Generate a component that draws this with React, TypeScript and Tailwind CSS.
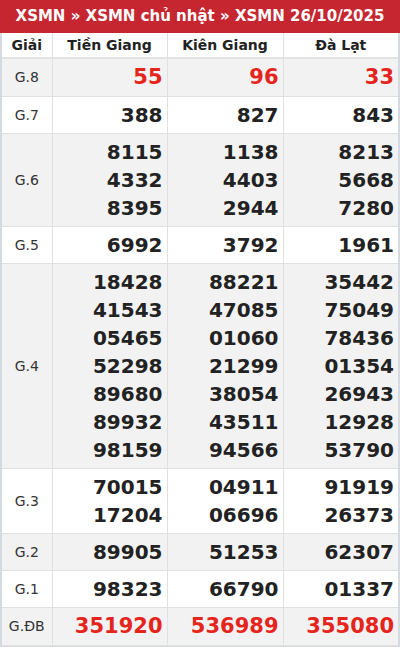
import React from 'react';

type Row = { label: string; values: string[][]; red?: boolean; shaded: boolean };

const provinces = ['Tiền Giang', 'Kiên Giang', 'Đà Lạt'];

const rows: Row[] = [
  { label: 'G.8', values: [['55'], ['96'], ['33']], red: true, shaded: true },
  { label: 'G.7', values: [['388'], ['827'], ['843']], shaded: false },
  { label: 'G.6', values: [['8115', '4332', '8395'], ['1138', '4403', '2944'], ['8213', '5668', '7280']], shaded: true },
  { label: 'G.5', values: [['6992'], ['3792'], ['1961']], shaded: false },
  {
    label: 'G.4',
    values: [
      ['18428', '41543', '05465', '52298', '89680', '89932', '98159'],
      ['88221', '47085', '01060', '21299', '38054', '43511', '94566'],
      ['35442', '75049', '78436', '01354', '26943', '12928', '53790'],
    ],
    shaded: true,
  },
  { label: 'G.3', values: [['70015', '17204'], ['04911', '06696'], ['91919', '26373']], shaded: false },
  { label: 'G.2', values: [['89905'], ['51253'], ['62307']], shaded: true },
  { label: 'G.1', values: [['98323'], ['66790'], ['01337']], shaded: false },
  { label: 'G.ĐB', values: [['351920'], ['536989'], ['355080']], red: true, shaded: true },
];

export default function App() {
  return (
    <div className="w-[400px] bg-white font-['DejaVu_Sans',sans-serif]">
      <div className="h-[33px] bg-[#c62630] flex items-center justify-center text-white font-bold text-[15px] leading-none">
        XSMN » XSMN chủ nhật » XSMN 26/10/2025
      </div>
      <div className="border-x-2 border-b-2 border-[#d5d9e2]">
        <table className="w-full border-collapse table-fixed">
          <colgroup>
            <col className="w-[50px]" />
            <col className="w-[115px]" />
            <col className="w-[116px]" />
            <col className="w-[115px]" />
          </colgroup>
          <thead>
            <tr className="h-[25px] border-b-2 border-[#e2e2e2]">
              <th className="text-[14px] font-bold text-[#222] leading-none text-center">Giải</th>
              {provinces.map((p) => (
                <th key={p} className="border-l border-[#e0e0e0] text-[14px] font-bold text-[#222] leading-none text-center">
                  {p}
                </th>
              ))}
            </tr>
          </thead>
          <tbody>
            {rows.map((r) => (
              <tr key={r.label} className={`border-b border-[#e0e0e0] ${r.shaded ? 'bg-[#f2f2f3]' : 'bg-white'}`}>
                <td className="text-center text-[14px] text-[#333] align-middle">{r.label}</td>
                {r.values.map((col, i) => (
                  <td key={i} className="border-l border-[#e0e0e0] text-right pr-[4px] py-[4px] align-middle">
                    {col.map((n) => (
                      <div
                        key={n}
                        className={
                          r.red
                            ? 'text-[21px] leading-[29px] font-bold text-[#e5251c]'
                            : 'text-[20px] leading-[28px] font-bold text-[#222]'
                        }
                      >
                        {n}
                      </div>
                    ))}
                  </td>
                ))}
              </tr>
            ))}
          </tbody>
        </table>
      </div>
    </div>
  );
}
